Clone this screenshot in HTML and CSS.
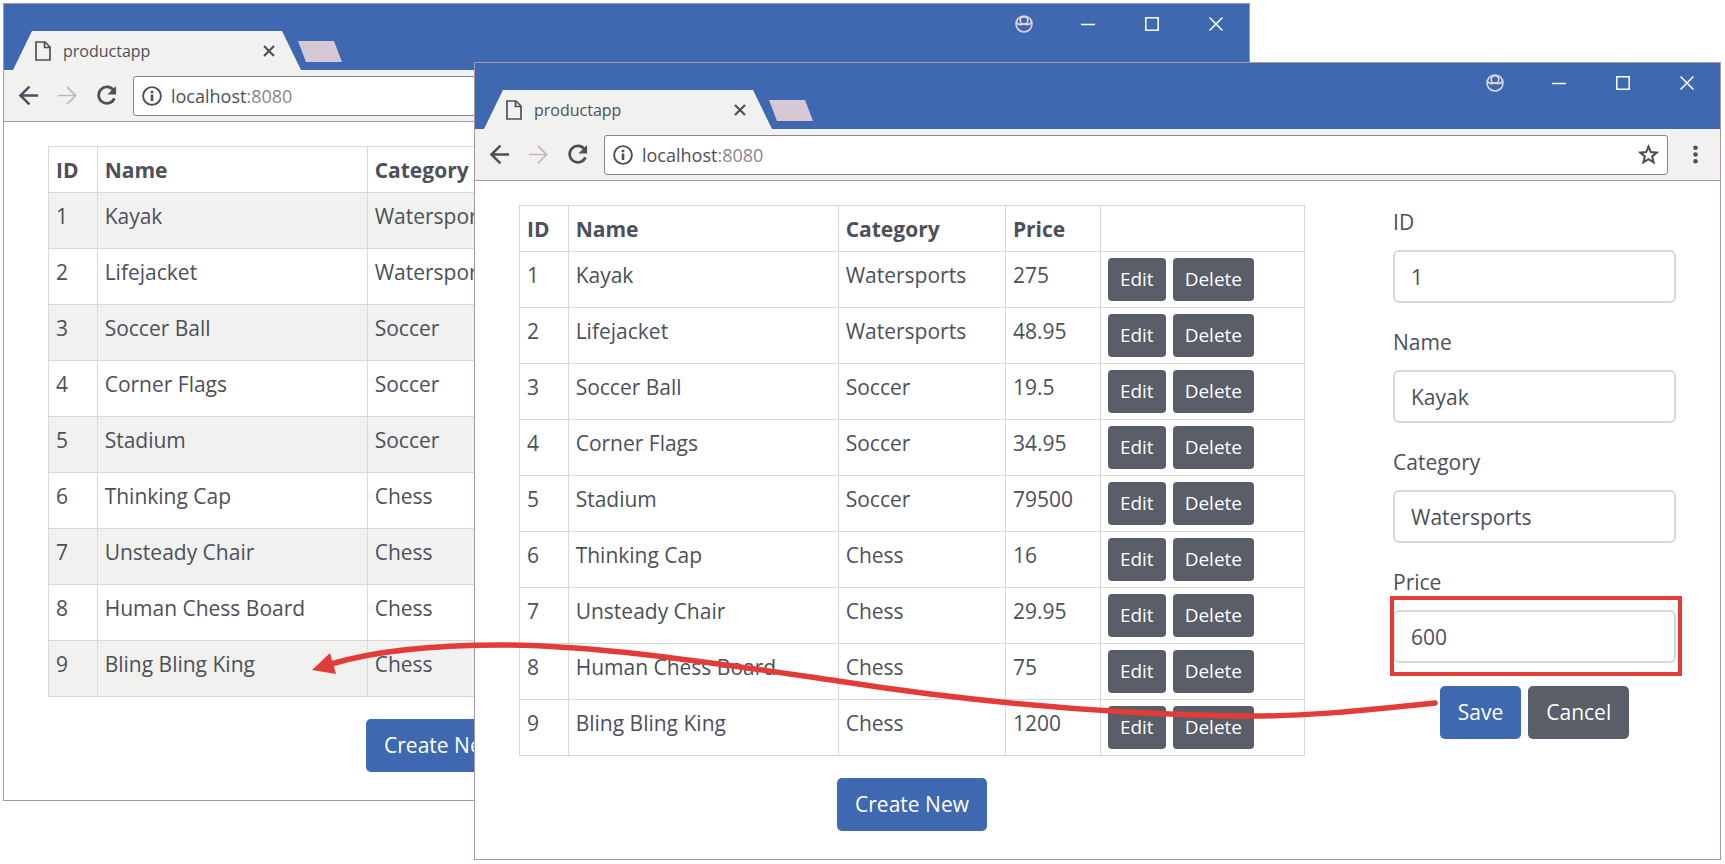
FILE: index.html
```html
<!DOCTYPE html>
<html lang="en">
<head>
<meta charset="utf-8">
<title>productapp</title>
<link rel="stylesheet" href="styles.css">
</head>
<body>
<svg class="sprite" aria-hidden="true">
  <symbol id="i-page" viewBox="0 0 16 20"><path d="M1 1h9l5 5v13H1zM9.500 1v5.500H15" fill="none" stroke="currentColor" stroke-width="1.700"/></symbol>
  <symbol id="i-x" viewBox="0 0 14 14"><path d="M2 2l10 10M12 2L2 12" fill="none" stroke="currentColor" stroke-width="2.200"/></symbol>
  <symbol id="i-back" viewBox="0 0 22 22"><path d="M21 11H3M12 1.800L2.500 11l9.500 9.200" fill="none" stroke="currentColor" stroke-width="2.600"/></symbol>
  <symbol id="i-forward" viewBox="0 0 22 22"><path d="M1 11h18M10.500 2l9 9-9 9" fill="none" stroke="currentColor" stroke-width="1.800"/></symbol>
  <symbol id="i-reload" viewBox="0 0 22 22"><path d="M18.300 5.500A8.600 8.600 0 1 0 19.300 14" fill="none" stroke="currentColor" stroke-width="2.800"/><path d="M21 1v9h-9z" fill="currentColor"/></symbol>
  <symbol id="i-info" viewBox="0 0 20 20"><circle cx="10" cy="10" r="8.900" fill="none" stroke="currentColor" stroke-width="1.900"/><path d="M8.700 8.600h2.600V15H8.700zM8.700 4.800h2.600v2.400H8.700z" fill="currentColor"/></symbol>
  <symbol id="i-star" viewBox="0 0 20 20"><path d="M10 2.500l2.200 5.200 5.600.5-4.300 3.700 1.300 5.600L10 14.500l-4.800 3 1.300-5.600L2.200 8.200l5.600-.5z" fill="none" stroke="currentColor" stroke-width="2"/></symbol>
  <symbol id="i-dots" viewBox="0 0 22 22"><circle cx="11" cy="4" r="2.400" fill="currentColor"/><circle cx="11" cy="11" r="2.400" fill="currentColor"/><circle cx="11" cy="18" r="2.400" fill="currentColor"/></symbol>
  <symbol id="i-user" viewBox="0 0 18 18"><circle cx="9" cy="9" r="8" fill="none" stroke="currentColor" stroke-width="1.600"/><circle cx="9" cy="5.500" r="3.800" fill="none" stroke="currentColor" stroke-width="1.600"/><path d="M1.500 7.500C4 11 6 9 9 9s5 2 7.500-1.500" fill="none" stroke="currentColor" stroke-width="2"/></symbol>
  <symbol id="i-min" viewBox="0 0 14 14"><path d="M0 7.500h14" stroke="currentColor" stroke-width="1.500"/></symbol>
  <symbol id="i-max" viewBox="0 0 14 14"><path d="M.8.800h12.400v12.400H.8z" fill="none" stroke="currentColor" stroke-width="1.500"/></symbol>
  <symbol id="i-close" viewBox="0 0 14 14"><path d="M.5.500l13 13M13.500.500l-13 13" stroke="currentColor" stroke-width="1.500"/></symbol>
</svg>

<main class="desktop">
  <section class="window window-back" aria-label="productapp after saving">
    <header class="titlebar">
      <div class="tab">
        <svg class="tab-icon"><use href="#i-page"/></svg>
        <span class="tab-title">productapp</span>
        <button class="icon-btn tab-close" aria-label="Close tab"><svg><use href="#i-x"/></svg></button>
      </div>
      <button class="new-tab" aria-label="New tab"></button>
      <div class="controls">
        <button class="icon-btn" aria-label="Profile"><svg class="user"><use href="#i-user"/></svg></button>
        <button class="icon-btn" aria-label="Minimize"><svg><use href="#i-min"/></svg></button>
        <button class="icon-btn" aria-label="Maximize"><svg><use href="#i-max"/></svg></button>
        <button class="icon-btn" aria-label="Close"><svg><use href="#i-close"/></svg></button>
      </div>
    </header>
    <nav class="toolbar">
      <button class="icon-btn" aria-label="Back"><svg><use href="#i-back"/></svg></button>
      <button class="icon-btn forward" aria-label="Forward"><svg><use href="#i-forward"/></svg></button>
      <button class="icon-btn" aria-label="Reload"><svg><use href="#i-reload"/></svg></button>
      <div class="omnibox">
        <svg><use href="#i-info"/></svg>
        <span class="url">localhost<span class="port">:8080</span></span>
      </div>
    </nav>
    <div class="page">
      <div class="list">
        <table class="products striped">
          <colgroup><col class="c-id"><col class="c-name"><col class="c-category"><col class="c-price"><col></colgroup>
          <thead><tr><th>ID</th><th>Name</th><th>Category</th><th></th><th></th></tr></thead>
          <tbody>
            <tr><td>1</td><td>Kayak</td><td>Watersports</td><td></td><td></td></tr>
            <tr><td>2</td><td>Lifejacket</td><td>Watersports</td><td></td><td></td></tr>
            <tr><td>3</td><td>Soccer Ball</td><td>Soccer</td><td></td><td></td></tr>
            <tr><td>4</td><td>Corner Flags</td><td>Soccer</td><td></td><td></td></tr>
            <tr><td>5</td><td>Stadium</td><td>Soccer</td><td></td><td></td></tr>
            <tr><td>6</td><td>Thinking Cap</td><td>Chess</td><td></td><td></td></tr>
            <tr><td>7</td><td>Unsteady Chair</td><td>Chess</td><td></td><td></td></tr>
            <tr><td>8</td><td>Human Chess Board</td><td>Chess</td><td></td><td></td></tr>
            <tr><td>9</td><td>Bling Bling King</td><td>Chess</td><td></td><td></td></tr>
          </tbody>
        </table>
        <button class="btn btn-primary">Create New</button>
      </div>
    </div>
  </section>

  <section class="window window-front" aria-label="productapp while editing">
    <header class="titlebar">
      <div class="tab">
        <svg class="tab-icon"><use href="#i-page"/></svg>
        <span class="tab-title">productapp</span>
        <button class="icon-btn tab-close" aria-label="Close tab"><svg><use href="#i-x"/></svg></button>
      </div>
      <button class="new-tab" aria-label="New tab"></button>
      <div class="controls">
        <button class="icon-btn" aria-label="Profile"><svg class="user"><use href="#i-user"/></svg></button>
        <button class="icon-btn" aria-label="Minimize"><svg><use href="#i-min"/></svg></button>
        <button class="icon-btn" aria-label="Maximize"><svg><use href="#i-max"/></svg></button>
        <button class="icon-btn" aria-label="Close"><svg><use href="#i-close"/></svg></button>
      </div>
    </header>
    <nav class="toolbar">
      <button class="icon-btn" aria-label="Back"><svg><use href="#i-back"/></svg></button>
      <button class="icon-btn forward" aria-label="Forward"><svg><use href="#i-forward"/></svg></button>
      <button class="icon-btn" aria-label="Reload"><svg><use href="#i-reload"/></svg></button>
      <div class="omnibox">
        <svg><use href="#i-info"/></svg>
        <span class="url">localhost<span class="port">:8080</span></span>
        <button class="icon-btn bookmark" aria-label="Bookmark"><svg><use href="#i-star"/></svg></button>
      </div>
      <button class="icon-btn" aria-label="Menu"><svg><use href="#i-dots"/></svg></button>
    </nav>
    <div class="page">
      <div class="list">
        <table class="products">
          <colgroup><col class="c-id"><col class="c-name"><col class="c-category"><col class="c-price"><col></colgroup>
          <thead><tr><th>ID</th><th>Name</th><th>Category</th><th>Price</th><th></th></tr></thead>
          <tbody>
            <tr><td>1</td><td>Kayak</td><td>Watersports</td><td>275</td><td><div class="actions"><button class="btn btn-sm">Edit</button><button class="btn btn-sm">Delete</button></div></td></tr>
            <tr><td>2</td><td>Lifejacket</td><td>Watersports</td><td>48.95</td><td><div class="actions"><button class="btn btn-sm">Edit</button><button class="btn btn-sm">Delete</button></div></td></tr>
            <tr><td>3</td><td>Soccer Ball</td><td>Soccer</td><td>19.5</td><td><div class="actions"><button class="btn btn-sm">Edit</button><button class="btn btn-sm">Delete</button></div></td></tr>
            <tr><td>4</td><td>Corner Flags</td><td>Soccer</td><td>34.95</td><td><div class="actions"><button class="btn btn-sm">Edit</button><button class="btn btn-sm">Delete</button></div></td></tr>
            <tr><td>5</td><td>Stadium</td><td>Soccer</td><td>79500</td><td><div class="actions"><button class="btn btn-sm">Edit</button><button class="btn btn-sm">Delete</button></div></td></tr>
            <tr><td>6</td><td>Thinking Cap</td><td>Chess</td><td>16</td><td><div class="actions"><button class="btn btn-sm">Edit</button><button class="btn btn-sm">Delete</button></div></td></tr>
            <tr><td>7</td><td>Unsteady Chair</td><td>Chess</td><td>29.95</td><td><div class="actions"><button class="btn btn-sm">Edit</button><button class="btn btn-sm">Delete</button></div></td></tr>
            <tr><td>8</td><td>Human Chess Board</td><td>Chess</td><td>75</td><td><div class="actions"><button class="btn btn-sm">Edit</button><button class="btn btn-sm">Delete</button></div></td></tr>
            <tr><td>9</td><td>Bling Bling King</td><td>Chess</td><td>1200</td><td><div class="actions"><button class="btn btn-sm">Edit</button><button class="btn btn-sm">Delete</button></div></td></tr>
          </tbody>
        </table>
        <button class="btn btn-primary">Create New</button>
      </div>
      <form class="editor">
        <div class="field"><label for="f-id">ID</label><input id="f-id" type="text" value="1"></div>
        <div class="field"><label for="f-name">Name</label><input id="f-name" type="text" value="Kayak"></div>
        <div class="field"><label for="f-category">Category</label><input id="f-category" type="text" value="Watersports"></div>
        <div class="field marked"><label for="f-price">Price</label><input id="f-price" type="text" value="600"></div>
        <div class="form-actions">
          <button type="button" class="btn btn-primary">Save</button>
          <button type="button" class="btn">Cancel</button>
        </div>
      </form>
    </div>
  </section>

  <svg class="arrow" viewBox="0 0 1725 864" aria-hidden="true">
    <path d="M1435 703C1360 711 1300 717 1238 716C1090 714 960 700 838 681C720 664 600 645 500 645C430 645 375 651 331 664" fill="none" stroke="#e23c38" stroke-width="5.500" stroke-linecap="round"/>
    <path d="M312 670L330 653L336 674Z" fill="#e23c38"/>
  </svg>
</main>
</body>
</html>
```
FILE: styles.css
```css
* { box-sizing: border-box; }

:root {
  --blue: #3e69b0;
  --ink: #4c505b;
  --grey: #595e69;
  --chrome: #f1f1ef;
  --frame: #a596a5;
  --line: #d8d8da;
  --red: #e23c38;
}

body {
  margin: 0;
  background: #fff;
  color: var(--ink);
  font: 21px/33px "Open Sans", "Noto Sans", sans-serif;
}

button, input { font: inherit; color: inherit; }

.sprite { position: absolute; width: 0; height: 0; }

.desktop { position: relative; min-height: 100vh; overflow: hidden; }

.window {
  position: absolute;
  background: #fff;
  border: 1px solid var(--frame);
}
.window-back { left: 3px; right: 475px; top: 3px; }
.window-front { left: 474px; right: 4px; top: 62px; }

.icon-btn {
  display: flex;
  align-items: center;
  justify-content: center;
  flex: none;
  width: 24px;
  height: 24px;
  padding: 0;
  border: 0;
  background: none;
}
.icon-btn svg { width: 21px; height: 21px; }

/* Title bar */
.titlebar {
  display: flex;
  align-items: flex-end;
  height: 66px;
  padding-left: 9px;
  background: var(--blue);
}
.tab {
  display: flex;
  align-items: center;
  width: 288px;
  height: 39px;
  padding: 0 20px 0 22px;
  background: var(--chrome);
  clip-path: polygon(0 100%, 19px 0, calc(100% - 19px) 0, 100% 100%);
}
.tab-icon { width: 16px; height: 20px; }
.tab-title { flex: 1; padding-left: 12px; font-size: 16px; line-height: 24px; }
.tab-close svg { width: 14px; height: 14px; }
.new-tab {
  width: 44px;
  height: 21px;
  margin: 0 0 8px -3px;
  padding: 0;
  border: 0;
  background: #d6c8d4;
  clip-path: polygon(0 0, 36px 0, 100% 100%, 8px 100%);
}
.controls { display: flex; align-self: flex-start; margin: 0 1px 0 auto; }
.controls .icon-btn { width: 64px; height: 39px; color: #fff; }
.controls svg { width: 14px; height: 14px; }
.controls .user { width: 18px; height: 18px; color: #e3d6e2; }

/* Toolbar */
.toolbar {
  display: flex;
  align-items: center;
  gap: 15px;
  height: 52px;
  padding: 0 13px 0 12px;
  background: var(--chrome);
  border-bottom: 1px solid var(--frame);
}
.forward { color: #c5b4c3; }
.omnibox {
  display: flex;
  flex: 1;
  align-items: center;
  gap: 9px;
  height: 40px;
  padding: 0 7px 0 8px;
  background: #fff;
  border: 1px solid #8f8290;
  border-radius: 3px;
}
.omnibox > svg { width: 20px; height: 20px; }
.url { flex: 1; font-size: 18px; line-height: 24px; }
.port { color: #8d828e; }

/* Page */
.page {
  display: grid;
  grid-template-columns: minmax(0, 25fr) minmax(0, 9fr);
  gap: 88px;
  padding: 24px 44px 28px;
}
.list { display: flex; flex-direction: column; align-items: center; gap: 22px; }

.products { width: 100%; table-layout: fixed; border-collapse: collapse; }
.products th, .products td {
  height: 56px;
  padding: 7px;
  border: 1px solid var(--line);
  text-align: left;
  vertical-align: top;
  white-space: nowrap;
}
.products th { height: 46px; padding: 7px 7px 5px; font-weight: 700; }
.products td:last-child { padding: 6px 7px; }
.striped tbody tr:nth-child(odd) { background: var(--chrome); }
.c-id { width: 6.2%; }
.c-name { width: 34.4%; }
.c-category { width: 21.3%; }
.c-price { width: 12.1%; }
.actions { display: flex; gap: 7px; }

.btn {
  padding: 10px 18px;
  border: 0;
  border-radius: 5px;
  background: var(--grey);
  color: #fff;
}
.btn-primary { background: var(--blue); }
.btn-sm { padding: 7px 12px; font-size: 19px; line-height: 29px; border-radius: 4px; }

/* Editor */
.editor { padding-top: 1px; }
.field { position: relative; margin-bottom: 23px; }
.field label { display: block; margin-bottom: 11px; }
.field input {
  display: block;
  width: 100%;
  height: 53px;
  padding: 0 16px;
  border: 2px solid var(--line);
  border-radius: 6px;
  background: #fff;
}
.marked::after {
  content: "";
  position: absolute;
  inset: 30px -6px -13px -3px;
  border: 4px solid var(--red);
  pointer-events: none;
}
.form-actions { display: flex; justify-content: center; gap: 7px; }

.arrow { position: absolute; left: 0; top: 0; width: 1725px; height: 864px; pointer-events: none; }
```
